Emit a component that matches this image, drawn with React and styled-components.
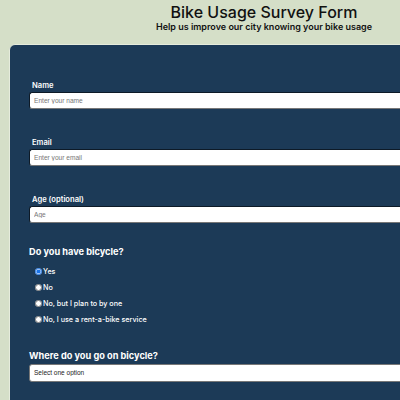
import React from 'react';
import styled, { createGlobalStyle } from 'styled-components';

const GlobalStyle = createGlobalStyle`
  html, body {
    margin: 0;
    padding: 0;
    overflow: hidden;
    background: #d5dfc8;
  }
  body {
    font-family: 'Inter', 'Liberation Sans', sans-serif;
  }
`;

const Page = styled.div`
  width: 510px;
  padding-left: 9px;
`;

const Header = styled.header`
  text-align: center;
  padding-top: 3px;
  height: 44px;
  box-sizing: border-box;
`;

const Title = styled.h1`
  margin: 0;
  font-size: 16px;
  line-height: 18px;
  font-weight: 500;
  color: #111;
`;

const Subtitle = styled.p`
  margin: 0;
  font-size: 9px;
  line-height: 11px;
  font-weight: 600;
  color: #111;
`;

const Card = styled.form`
  background: #1c3a57;
  border-radius: 6px;
  border: 1px solid #e6ecdd;
  padding: 35px 0 40px 19px;
  min-height: 400px;
`;

const Field = styled.div`
  margin-bottom: ${({ $last }) => ($last ? '21px' : '28px')};
`;

const Label = styled.label`
  display: block;
  padding-left: 3px;
  font-size: 7.6px;
  line-height: 12px;
  font-weight: 600;
  color: #fff;
`;

const Input = styled.input`
  display: block;
  box-sizing: border-box;
  width: 480px;
  height: 17px;
  margin: 0;
  padding: 0 4px;
  border: 1px solid #777;
  border-top-color: #0d1a27;
  border-left-color: #0d1a27;
  border-radius: 3px;
  background: #fff;
  font-family: 'Liberation Sans', Arial, sans-serif;
  font-size: 6.6px;
  &::placeholder {
    color: #777;
  }
`;

const Question = styled.h2`
  margin: 0;
  font-size: 9.2px;
  line-height: 16px;
  font-weight: 700;
  color: #fff;
`;

const Group = styled.div`
  margin-top: ${({ $first }) => ($first ? '0' : '20px')};
`;

const Options = styled.div`
  margin-top: 3px;
  padding-left: 6px;
`;

const Option = styled.label`
  display: flex;
  align-items: center;
  height: 16.2px;
  font-size: 7.2px;
  font-weight: 500;
  color: #fff;
`;

const Radio = styled.input`
  width: 7px;
  height: 7px;
  margin: 0 1px 0 0;
  accent-color: #1a73e8;
`;

const Select = styled.select`
  display: block;
  box-sizing: border-box;
  width: 480px;
  height: 18px;
  margin: 0;
  padding: 0 4px;
  border: 1px solid #777;
  border-radius: 3px;
  background: #fff;
  font-family: 'Liberation Sans', Arial, sans-serif;
  font-size: 6.5px;
  color: #222;
  appearance: none;
`;

const options = [
  'Yes',
  'No',
  'No, but I plan to by one',
  'No, I use a rent-a-bike service',
];

export default function App() {
  return (
    <Page>
      <GlobalStyle />
      <Header>
        <Title>Bike Usage Survey Form</Title>
        <Subtitle>Help us improve our city knowing your bike usage</Subtitle>
      </Header>
      <Card>
        <Field>
          <Label htmlFor="name">Name</Label>
          <Input id="name" placeholder="Enter your name" />
        </Field>
        <Field>
          <Label htmlFor="email">Email</Label>
          <Input id="email" placeholder="Enter your email" />
        </Field>
        <Field $last>
          <Label htmlFor="age">Age (optional)</Label>
          <Input id="age" placeholder="Age" />
        </Field>
        <Group $first>
          <Question>Do you have bicycle?</Question>
          <Options>
            {options.map((o, i) => (
              <Option key={o}>
                <Radio type="radio" name="bike" defaultChecked={i === 0} />
                {o}
              </Option>
            ))}
          </Options>
        </Group>
        <Group>
          <Question>Where do you go on bicycle?</Question>
          <Select defaultValue="">
            <option value="">Select one option</option>
          </Select>
        </Group>
      </Card>
    </Page>
  );
}
